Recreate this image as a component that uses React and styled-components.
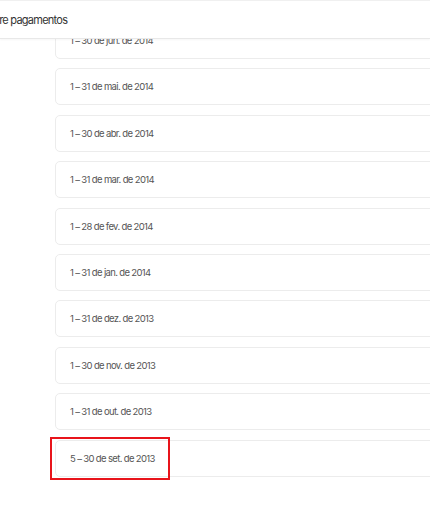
import React from 'react'
import styled, { createGlobalStyle } from 'styled-components'

const periods = [
    '1 – 30 de jun. de 2014',
    '1 – 31 de mai. de 2014',
    '1 – 30 de abr. de 2014',
    '1 – 31 de mar. de 2014',
    '1 – 28 de fev. de 2014',
    '1 – 31 de jan. de 2014',
    '1 – 31 de dez. de 2013',
    '1 – 30 de nov. de 2013',
    '1 – 31 de out. de 2013',
    '5 – 30 de set. de 2013',
]

const Global = createGlobalStyle`
    html, body { margin:0; padding:0; background:#fff; }
    body { font-family: Inter, "Open Sans", sans-serif; }
`

const Page = styled.div`
    position:relative;
    width:430px;
    height:516px;
    overflow:hidden;
    background:#fff;
`

const Header = styled.div`
    position:absolute;
    top:0;
    left:0;
    right:0;
    z-index:2;
    height:37px;
    display:flex;
    align-items:center;
    background:#fff;
    border-top:1px solid #f0f0f0;
    border-bottom:1px solid #e8e8e8;
    box-shadow:0 1px 2px rgba(0,0,0,0.04);
`

const Title = styled.span`
    margin-left:-19px;
    font-size:11px;
    letter-spacing:-0.75px;
    color:#333;
    white-space:nowrap;
`

const List = styled.div`
    display:flex;
    flex-direction:column;
    gap:9.4px;
    padding:22px 0 0 55px;
`

const Card = styled.div`
    position:relative;
    height:37px;
    width:420px;
    box-sizing:border-box;
    display:flex;
    align-items:center;
    padding-left:14px;
    border:1px solid #ececec;
    border-radius:5px;
    font-size:9.5px;
    letter-spacing:-0.65px;
    color:#555;
`

const Highlight = styled.div`
    position:absolute;
    left:-6px;
    top:-4px;
    width:120px;
    height:43px;
    box-sizing:border-box;
    border:2px solid #e8141b;
`

export default function App(){
    return (
        <>
        <Global />
        <Page>
            <Header><Title>Sobre pagamentos</Title></Header>
            <List>
                {periods.map((p, i) => (
                    <Card key={i}>
                        {p}
                        {i === periods.length - 1 && <Highlight />}
                    </Card>
                ))}
            </List>
        </Page>
        </>
    )
}
